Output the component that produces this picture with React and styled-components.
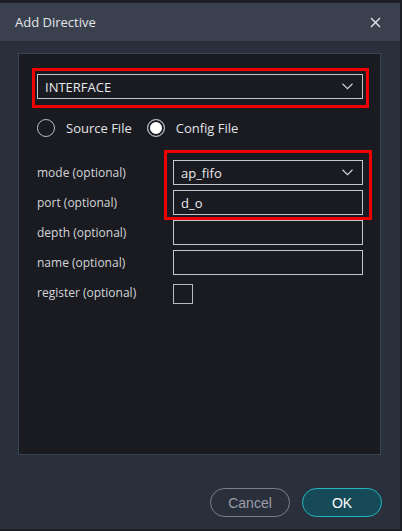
import styled, { createGlobalStyle } from "styled-components";

const Global = createGlobalStyle`
  body {
    margin: 0;
    background: #1d1f25;
    font-family: "Open Sans", "Noto Sans", sans-serif;
  }
`;

const Chevron = () => (
  <svg width="11" height="7" viewBox="0 0 11 7">
    <polyline points="0.5,0.8 5.5,5.6 10.5,0.8" fill="none" stroke="#cfd2d8" strokeWidth="1.2" />
  </svg>
);

const CloseIcon = () => (
  <svg width="11" height="11" viewBox="0 0 11 11">
    <path d="M1 1 L10 10 M10 1 L1 10" stroke="#e2e4e8" strokeWidth="1.4" />
  </svg>
);

const fields = [
  { label: "mode (optional)", kind: "select", value: "ap_fifo" },
  { label: "port (optional)", kind: "text", value: "d_o" },
  { label: "depth (optional)", kind: "text", value: "" },
  { label: "name (optional)", kind: "text", value: "" },
  { label: "register (optional)", kind: "check" },
];

const App = () => {
  return (
    <>
      <Global />
      <Dialog>
        <Header>
          <Title>Add Directive</Title>
          <CloseButton><CloseIcon /></CloseButton>
        </Header>
        <Body>
          <Panel>
            <Highlight>
              <SelectBox>
                <span>INTERFACE</span>
                <Chevron />
              </SelectBox>
            </Highlight>
            <RadioRow>
              <RadioOption>
                <Radio />
                Source File
              </RadioOption>
              <RadioOption>
                <Radio checked />
                Config File
              </RadioOption>
            </RadioRow>
            <Form>
              {fields.map((f) => (
                <Row key={f.label}>
                  <Label>{f.label}</Label>
                  {f.kind === "select" && (
                    <FieldBox>
                      <span>{f.value}</span>
                      <Chevron />
                    </FieldBox>
                  )}
                  {f.kind === "text" && <FieldBox>{f.value}</FieldBox>}
                  {f.kind === "check" && <Checkbox />}
                </Row>
              ))}
              <Marker />
            </Form>
          </Panel>
        </Body>
        <Footer>
          <Button>Cancel</Button>
          <Button primary>OK</Button>
        </Footer>
      </Dialog>
    </>
  );
};

export default App;

const Dialog = styled.div`
  margin-top: 3px;
  width: 400px;
  height: 526px;
  background: #2a2f3c;
  display: flex;
  flex-direction: column;
`;

const Header = styled.div`
  height: 38px;
  background: #3a404e;
  display: flex;
  align-items: center;
  justify-content: space-between;
  padding: 0 19px 0 15px;
`;

const Title = styled.div`
  color: #e4e6ea;
  font-size: 13px;
`;

const CloseButton = styled.div`
  display: flex;
  align-items: center;
`;

const Body = styled.div`
  padding: 12px 19px 0 18px;
`;

const Panel = styled.div`
  height: 402px;
  box-sizing: border-box;
  border: 1px solid #3c4353;
  background: #1a1b20;
  padding: 14px 11px 0 13px;
`;

const Highlight = styled.div`
  border: 3px solid #f00000;
  padding: 3px 3px 6px 2px;
`;

const SelectBox = styled.div`
  height: 25px;
  box-sizing: border-box;
  border: 1px solid #c4c6ca;
  display: flex;
  align-items: center;
  justify-content: space-between;
  padding: 0 9px 0 7px;
  color: #e8e9ec;
  font-size: 13px;
`;

const RadioRow = styled.div`
  display: flex;
  align-items: center;
  gap: 15px;
  margin: 11px 0 0 5px;
  height: 18px;
`;

const RadioOption = styled.label`
  display: flex;
  align-items: center;
  gap: 11px;
  color: #e2e3e6;
  font-size: 13px;
`;

const Radio = styled.span`
  width: 18px;
  height: 18px;
  box-sizing: border-box;
  border-radius: 50%;
  border: 1.5px solid #b8bbc0;
  background: ${(p) => (p.checked ? "#ffffff" : "transparent")};
  box-shadow: ${(p) => (p.checked ? "inset 0 0 0 2px #1a1b20" : "none")};
`;

const Form = styled.div`
  position: relative;
  display: flex;
  flex-direction: column;
  gap: 6px;
  margin: 23px 0 0 5px;
`;

const Row = styled.div`
  display: grid;
  grid-template-columns: 136px 190px;
  align-items: center;
  height: 24px;
`;

const Label = styled.div`
  color: #d4d6da;
  font-size: 12px;
`;

const FieldBox = styled.div`
  height: 25px;
  box-sizing: border-box;
  border: 1px solid #c4c6ca;
  display: flex;
  align-items: center;
  justify-content: space-between;
  padding: 0 9px 0 7px;
  color: #e8e9ec;
  font-size: 13px;
`;

const Checkbox = styled.div`
  width: 20px;
  height: 20px;
  box-sizing: border-box;
  border: 1.5px solid #b8bbc0;
  margin-top: 4px;
`;

const Marker = styled.div`
  position: absolute;
  left: 127px;
  top: -10px;
  width: 208px;
  height: 70px;
  box-sizing: border-box;
  border: 3px solid #f00000;
  pointer-events: none;
`;

const Footer = styled.div`
  margin-top: auto;
  display: flex;
  justify-content: flex-end;
  gap: 12px;
  padding: 0 18px 12px 0;
`;

const Button = styled.button`
  width: 80px;
  height: 29px;
  border-radius: 15px;
  font-family: "Liberation Sans", Arial, sans-serif;
  font-size: 14px;
  border: 1px solid ${(p) => (p.primary ? "#22b6c2" : "#7c8089")};
  background: ${(p) => (p.primary ? "#174a57" : "transparent")};
  color: ${(p) => (p.primary ? "#ffffff" : "#9a9ea6")};
`;
